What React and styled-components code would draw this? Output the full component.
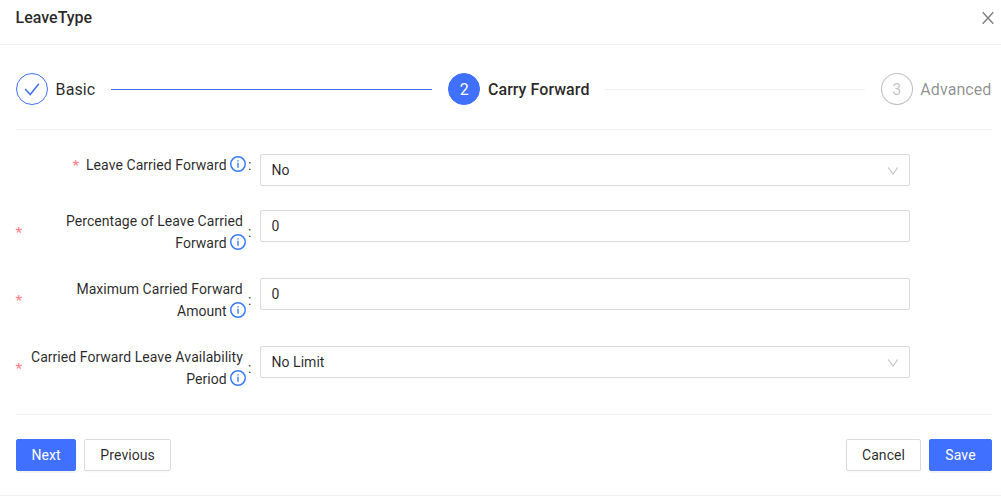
import React from 'react';
import styled, { createGlobalStyle, css } from 'styled-components';

const primary = '#4070ff';

const GlobalStyle = createGlobalStyle`
  *, *::before, *::after { box-sizing: border-box; }
  body {
    margin: 0;
    background: #fff;
    color: rgba(0, 0, 0, 0.85);
    font: 14px/22px Roboto, "Liberation Sans", sans-serif;
    font-kerning: none;
    overflow: hidden;
  }
`;

const Modal = styled.div`
  height: 496px;
  border-bottom: 1px solid #f0f0f0;
`;

const Header = styled.header`
  display: flex;
  justify-content: space-between;
  height: 45px;
  padding: 6px 7px 0 15.5px;
  border-bottom: 1px solid #f0f0f0;
`;

const Title = styled.h1`
  margin: 1px 0 0;
  font-size: 16px;
  line-height: 22px;
  font-weight: 500;
  font-kerning: normal;
`;

const CloseButton = styled.button`
  display: flex;
  width: 12px;
  height: 12px;
  margin-top: 6px;
  padding: 0;
  border: 0;
  background: none;
  color: rgba(0, 0, 0, 0.5);
`;

const Body = styled.main`
  padding: 0 9px 0 16px;
`;

const Steps = styled.nav`
  display: flex;
  align-items: center;
  gap: 16px;
  height: 85px;
  padding-top: 4px;
  border-bottom: 1px solid #f0f0f0;
`;

const Step = styled.div`
  display: flex;
  align-items: center;
  flex: ${(p) => (p.$status === 'wait' ? '0 0 111.3px' : '1 1 0')};
  font-size: 16px;
  line-height: 32px;
  white-space: nowrap;
  font-weight: ${(p) => (p.$status === 'active' ? 500 : 400)};
  color: ${(p) => (p.$status === 'wait' ? 'rgba(0, 0, 0, 0.45)' : 'rgba(0, 0, 0, 0.85)')};
`;

const StepBadge = styled.span`
  display: flex;
  align-items: center;
  justify-content: center;
  width: 32px;
  height: 32px;
  margin-right: 8px;
  padding-top: 1px;
  border: 1px solid ${(p) => (p.$status === 'wait' ? 'rgba(0, 0, 0, 0.25)' : primary)};
  border-radius: 50%;
  font-size: 16px;
  font-weight: 400;
  background: ${(p) => (p.$status === 'active' ? primary : '#fff')};
  color: ${(p) => ({ active: '#fff', wait: 'rgba(0, 0, 0, 0.25)', done: primary })[p.$status]};
`;

const StepTitle = styled.span`
  padding-top: 2px;
  margin-left: -0.4px;
  letter-spacing: 0.05px;
`;

const StepLine = styled.span`
  flex: 1;
  height: 1px;
  margin-left: 15.5px;
  background: ${(p) => (p.$done ? primary : '#f0f0f0')};
`;

const Form = styled.form`
  display: flex;
  flex-direction: column;
  gap: 24px;
  height: 285px;
  padding-top: 24px;
  border-bottom: 1px solid #f0f0f0;
`;

const FormRow = styled.div`
  display: grid;
  grid-template-columns: 244px 650px;
  align-items: start;
`;

const Label = styled.label`
  display: flex;
  align-items: center;
  justify-content: flex-end;
`;

const RequiredMark = styled.span`
  margin-left: -0.5px;
  margin-right: ${(p) => (p.$pinned ? 'auto' : '7px')};
  color: #ff7a85;
  font: 17px/14px "Liberation Sans", sans-serif;
  padding-top: 3px;
`;

const LabelText = styled.span`
  text-align: right;
  white-space: pre-line;
  letter-spacing: 0.035px;
`;

const Colon = styled.span`
  margin: 0 8.5px 0 5.3px;
`;

const InfoIconSvg = styled.svg`
  width: 16px;
  height: 16px;
  margin-left: -0.4px;
  margin-right: -3px;
  vertical-align: -2px;
  color: #3b7cff;
`;

const Field = styled.div`
  display: flex;
  align-items: center;
  justify-content: space-between;
  height: 32px;
  padding: 0 10px 0 10.5px;
  border: 1px solid #d9d9d9;
  border-radius: 2px;
  color: rgba(0, 0, 0, 0.85);
  letter-spacing: 0.04px;
`;

const ChevronSvg = styled.svg`
  width: 12px;
  height: 12px;
  margin-top: 1px;
  color: rgba(0, 0, 0, 0.25);
`;

const Footer = styled.footer`
  display: flex;
  justify-content: space-between;
  padding-top: 24px;
`;

const ButtonGroup = styled.div`
  display: flex;
  gap: 8px;
`;

const Button = styled.button`
  width: ${(p) => p.$width}px;
  height: 32px;
  padding: 0;
  border: 1px solid #d9d9d9;
  border-radius: 2px;
  background: #fff;
  color: rgba(0, 0, 0, 0.85);
  font: inherit;
  font-kerning: none;
  letter-spacing: 0.04px;
  box-shadow: 0 2px 0 rgba(0, 0, 0, 0.015);
  ${(p) => p.$primary && css`
    border-color: ${primary};
    background: ${primary};
    color: #fff;
    box-shadow: 0 2px 0 rgba(0, 0, 0, 0.045);
  `}
`;

const CloseIcon = () => (
  <svg width="12" height="12" viewBox="0 0 12 12" fill="none" stroke="currentColor" strokeWidth="1.4">
    <path d="M0.7 0.2 11.3 11.8M11.3 0.2 0.7 11.8" />
  </svg>
);

const CheckIcon = () => (
  <svg width="16" height="16" viewBox="0 0 16 16" fill="none" stroke="currentColor" strokeWidth="1.5">
    <path d="M1.2 7.1 6.2 12.5 14.8 1.8" />
  </svg>
);

const InfoIcon = () => (
  <InfoIconSvg viewBox="0 0 16 16" fill="none" stroke="currentColor">
    <circle cx="8" cy="8" r="7.25" strokeWidth="1.5" />
    <path d="M8 6.8V11.8M8 4.2V5.6" strokeWidth="1.4" />
  </InfoIconSvg>
);

const ChevronIcon = () => (
  <ChevronSvg viewBox="0 0 12 12" fill="none" stroke="currentColor" strokeWidth="1.1">
    <path d="M1.2 2.5 6 9.1 10.8 2.5" />
  </ChevronSvg>
);

const fields = [
  { label: 'Leave Carried Forward', value: 'No', select: true },
  { label: 'Percentage of Leave Carried\nForward', value: '0' },
  { label: 'Maximum Carried Forward\nAmount', value: '0' },
  { label: 'Carried Forward Leave Availability\nPeriod', value: 'No Limit', select: true },
];

export default function App() {
  return (
    <Modal>
      <GlobalStyle />
      <Header>
        <Title>LeaveType</Title>
        <CloseButton type="button" aria-label="Close"><CloseIcon /></CloseButton>
      </Header>
      <Body>
        <Steps>
          <Step $status="done">
            <StepBadge $status="done"><CheckIcon /></StepBadge>
            <StepTitle>Basic</StepTitle>
            <StepLine $done />
          </Step>
          <Step $status="active">
            <StepBadge $status="active">2</StepBadge>
            <StepTitle>Carry Forward</StepTitle>
            <StepLine />
          </Step>
          <Step $status="wait">
            <StepBadge $status="wait">3</StepBadge>
            <StepTitle>Advanced</StepTitle>
          </Step>
        </Steps>
        <Form>
          {fields.map((f) => (
            <FormRow key={f.label}>
              <Label>
                <RequiredMark $pinned={f.label.includes('\n')}>*</RequiredMark>
                <LabelText>{f.label} <InfoIcon /></LabelText>
                <Colon>:</Colon>
              </Label>
              <Field>
                {f.value}
                {f.select && <ChevronIcon />}
              </Field>
            </FormRow>
          ))}
        </Form>
        <Footer>
          <ButtonGroup>
            <Button type="button" $width={60} $primary>Next</Button>
            <Button type="button" $width={87}>Previous</Button>
          </ButtonGroup>
          <ButtonGroup>
            <Button type="button" $width={75}>Cancel</Button>
            <Button type="button" $width={63} $primary>Save</Button>
          </ButtonGroup>
        </Footer>
      </Body>
    </Modal>
  );
}
